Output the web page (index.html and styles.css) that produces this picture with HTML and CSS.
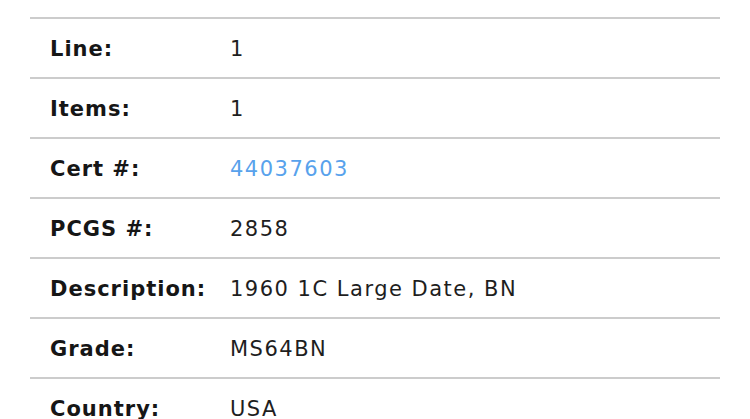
FILE: index.html
```html
<!DOCTYPE html>
<html>
<head>
<meta charset="utf-8">
<link rel="stylesheet" href="styles.css">
</head>
<body>
<div class="details">
  <div class="row"><div class="label">Line:</div><div class="value">1</div></div>
  <div class="row"><div class="label">Items:</div><div class="value">1</div></div>
  <div class="row"><div class="label">Cert #:</div><div class="value"><a class="link" href="#">44037603</a></div></div>
  <div class="row"><div class="label">PCGS #:</div><div class="value">2858</div></div>
  <div class="row"><div class="label">Description:</div><div class="value">1960 1C Large Date, BN</div></div>
  <div class="row"><div class="label">Grade:</div><div class="value">MS64BN</div></div>
  <div class="row"><div class="label">Country:</div><div class="value">USA</div></div>
</div>
</body>
</html>
```
FILE: styles.css
```css
html, body {
  margin: 0;
  padding: 0;
  background: #fff;
}
body {
  font-family: "DejaVu Sans", sans-serif;
  color: #1c1c1c;
  padding: 17px 30px 0 30px;
}
.details {
  display: flex;
  flex-direction: column;
}
.row {
  display: flex;
  align-items: center;
  height: 57px;
  padding-top: 1px;
  border-top: 2px solid #cccccc;
  padding-left: 20px;
  font-size: 21px;
}
.label {
  width: 180px;
  font-weight: bold;
  color: #161616;
  letter-spacing: 1px;
}
.value {
  color: #1e1e1e;
  letter-spacing: 1.5px;
}
.link {
  color: #58a2ec;
  text-decoration: none;
}
```
